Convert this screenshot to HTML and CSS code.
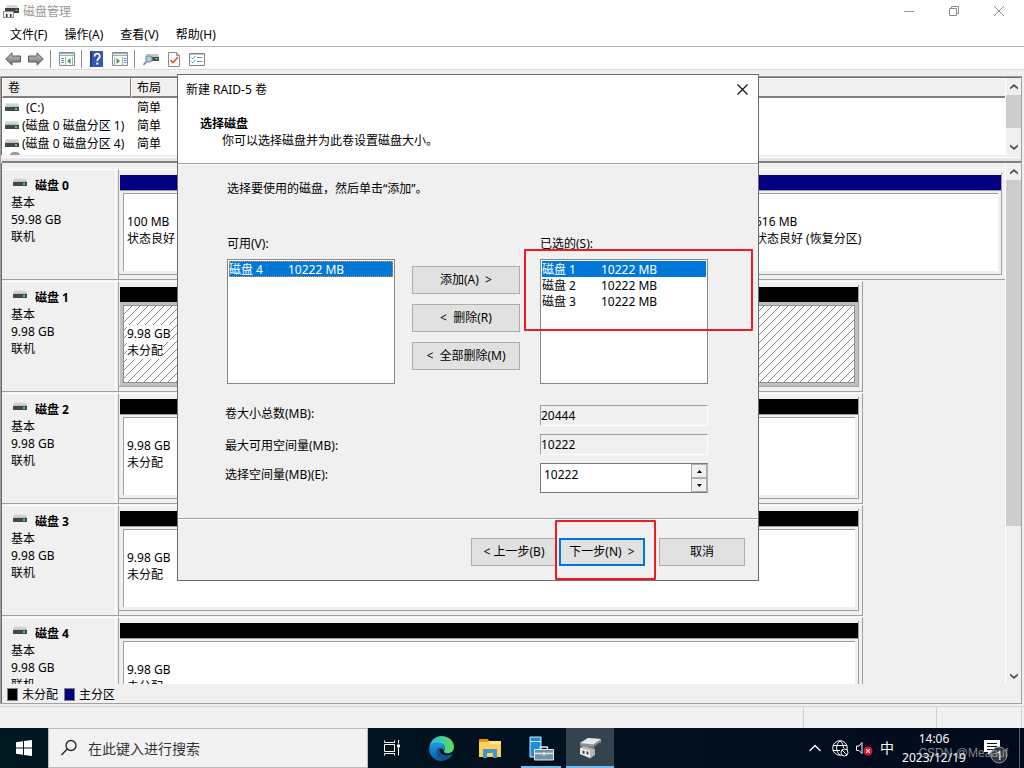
FILE: index.html
```html
<!DOCTYPE html>
<html lang="zh-CN">
<head>
<meta charset="utf-8">
<title>磁盘管理</title>
<link rel="stylesheet" href="styles.css">
</head>
<body>
<svg class="defs" aria-hidden="true">
  <defs>
    <linearGradient id="silver" x1="0" y1="0" x2="0" y2="1"><stop offset="0" stop-color="#e4e6e8"/><stop offset="1" stop-color="#b9bcbf"/></linearGradient>
    <linearGradient id="edge-a" x1="0" y1="0" x2="1" y2="0"><stop offset="0" stop-color="#2cb8e6"/><stop offset="1" stop-color="#62dd58"/></linearGradient>
    <linearGradient id="edge-b" x1="0" y1="0" x2="0" y2="1"><stop offset="0" stop-color="#1a9be0"/><stop offset="1" stop-color="#0c59a4"/></linearGradient>
    <linearGradient id="arrow-fill" x1="0" y1="0" x2="0" y2="1"><stop offset="0" stop-color="#c4c4c4"/><stop offset="1" stop-color="#6f6f6f"/></linearGradient>
    <pattern id="hatch" width="8" height="8" patternUnits="userSpaceOnUse"><path d="M-1 9L9 -1M-1 1L1 -1M7 9L9 7" stroke="#8c8c8c" stroke-width="1"/></pattern>
  </defs>
  <symbol id="drive" viewBox="0 0 14 8">
    <path d="M1 0h12l1 4H0z" fill="url(#silver)"/><path d="M0 4h14v4H0z" fill="#45484a"/><path d="M10 5h2v2h-2z" fill="#3be04a"/>
  </symbol>
  <symbol id="up" viewBox="0 0 8 6"><path d="M0 5.5V3.5L4 0L8 3.5V5.5L4 2.5z" fill="#505050"/></symbol>
  <symbol id="down" viewBox="0 0 8 6"><path d="M0 .5V2.500L4 6L8 2.500V.5L4 3.500z" fill="#505050"/></symbol>
</svg>

<div class="screen">
  <header class="titlebar">
    <svg class="app-icon" width="16" height="15" viewBox="0 0 16 15"><path d="M4 1h10l1.500 3H2.500z" fill="#d5d7d8"/><path d="M2 4h14v5H2z" fill="#3e4143"/><path d="M12.500 5.500h2v1.500h-2z" fill="#3be04a"/><path d="M0 7h11v7H0z" fill="#8b8e90"/><path d="M1 8h9v5H1z" fill="#f2f2f2"/><path d="M3 10h1.500v3H3zM7 10h1.500v3H7z" fill="#333"/></svg>
    <span class="title-text">磁盘管理</span>
    <div class="caption">
      <button type="button" aria-label="最小化"><svg width="10" height="10"><path d="M0 5.500h10" stroke="#999"/></svg></button>
      <button type="button" aria-label="还原"><svg width="10" height="10" fill="none" stroke="#8a8a8a"><path d="M.5 2.500h7v7h-7zM2.500 2.500v-2h7v7h-2"/></svg></button>
      <button type="button" aria-label="关闭"><svg width="10" height="10"><path d="M0 0L10 10M10 0L0 10" stroke="#8a8a8a"/></svg></button>
    </div>
  </header>
  <nav class="menubar">
    <button type="button">文件(F)</button><button type="button">操作(A)</button><button type="button">查看(V)</button><button type="button">帮助(H)</button>
  </nav>
  <div class="toolbar">
    <div class="history">
    <button type="button" aria-label="后退"><svg width="16" height="14" viewBox="0 0 16 14"><path d="M.7 7L7 .8V4H15.500V10H7V13.200z" fill="url(#arrow-fill)" stroke="#5c5c5c"/></svg></button>
    <button type="button" aria-label="前进"><svg width="16" height="14" viewBox="0 0 16 14"><path d="M15.300 7L9 .8V4H.5V10H9V13.200z" fill="url(#arrow-fill)" stroke="#5c5c5c"/></svg></button>
    </div>
    <i class="sep"></i>
    <button type="button" aria-label="显示控制台树"><svg width="16" height="14" viewBox="0 0 16 14"><path d="M.5 .5h15v13H.5z" fill="#fff" stroke="#858c93"/><path d="M1 1h14v3H1z" fill="#a5adb5"/><path d="M1 2.500h14" stroke="#e9ecef"/><path d="M6.500 5v8.500M13.500 5v8.500" stroke="#a5adb5"/><path d="M2 6.500h3M2 8.500h3M2 10.500h3" stroke="#5f87ad"/><path d="M11.500 6v6L8 9z" fill="#37a63b"/></svg></button>
    <i class="sep"></i>
    <button type="button" aria-label="帮助"><svg width="13" height="16" viewBox="0 0 13 16"><path d="M0 0h13v16H0z" fill="#3657b8"/><path d="M0 0h2v16H0z" fill="#223a86"/><path d="M4.500 5.500C4.500 1.500 10 2 9.800 5.200C9.700 7.500 7.300 7.200 7.300 10" fill="none" stroke="#fff" stroke-width="1.800"/><path d="M6.300 11.500h2v2h-2z" fill="#fff"/></svg></button>
    <button type="button" aria-label="显示操作窗格"><svg width="16" height="14" viewBox="0 0 16 14"><path d="M.5 .5h15v13H.5z" fill="#fff" stroke="#858c93"/><path d="M1 1h14v3H1z" fill="#a5adb5"/><path d="M1 2.500h14" stroke="#e9ecef"/><path d="M2.500 5v8.500M10.500 5v8.500" stroke="#a5adb5"/><path d="M12 6.500h2.500M12 8.500h2.500M12 10.500h2.500" stroke="#5f87ad"/><path d="M4.500 6v6L8 9z" fill="#37a63b"/></svg></button>
    <i class="sep"></i>
    <button type="button" aria-label="重新扫描磁盘"><svg width="16" height="14" viewBox="0 0 16 14"><path d="M3 2h12l1 3H2z" fill="#c2c6c9"/><path d="M3 5h13v4H3z" fill="#4b4f52"/><path d="M12.500 6h2v1.500h-2z" fill="#3be04a"/><circle cx="6" cy="7" r="3.200" fill="#a8d0e8" stroke="#6f8797"/><path d="M3.500 9.500L.5 13" stroke="#77889a" stroke-width="1.800"/></svg></button>
    <button type="button" aria-label="属性"><svg width="12" height="15" viewBox="0 0 12 15"><path d="M.5 .5h8l3 3v11H.5z" fill="#fff" stroke="#8a8a8a"/><path d="M8.500 .5v3h3" fill="none" stroke="#8a8a8a"/><path d="M2.500 8L5 10.500L10 5" fill="none" stroke="#e8541c" stroke-width="1.700"/></svg></button>
    <button type="button" aria-label="选项"><svg width="16" height="13" viewBox="0 0 16 13"><path d="M.5 .5h15v12H.5z" fill="#fff" stroke="#7c838a"/><path d="M.5 1h15" stroke="#7c838a"/><path d="M2.500 4.500l1.300 1.300L6.500 3M2.500 8.500l1.300 1.300L6.500 7" fill="none" stroke="#2f8fd8"/><path d="M8 4.500h5.500M8 8.500h5.500" stroke="#8b9096"/></svg></button>
  </div>

  <main class="workspace">
    <section class="volumes">
      <div class="volume-list">
        <table>
          <thead><tr><th class="col-name">卷</th><th class="col-layout">布局</th><th></th></tr></thead>
          <tbody>
            <tr><td><svg class="drive"><use href="#drive"/></svg> <span class="vol-c">(C:)</span></td><td>简单</td><td></td></tr>
            <tr><td><svg class="drive"><use href="#drive"/></svg><span>(磁盘 0 磁盘分区 1)</span></td><td>简单</td><td></td></tr>
            <tr><td><svg class="drive"><use href="#drive"/></svg><span>(磁盘 0 磁盘分区 4)</span></td><td>简单</td><td></td></tr>
          </tbody>
        </table>
        <div class="disc-peek"></div>
      </div>
      <div class="scrollbar">
        <button type="button" aria-label="向上滚动"><svg><use href="#up"/></svg></button>
        <div class="track"><div class="thumb thumb-vol"></div></div>
        <button type="button" aria-label="向下滚动"><svg><use href="#down"/></svg></button>
      </div>
    </section>
    <div class="splitter"></div>
    <section class="disks">
      <div class="disk-list">
        <article class="disk">
          <div class="disk-info"><h2><svg class="drive"><use href="#drive"/></svg>磁盘 0</h2><p>基本</p><p>59.98 GB</p><p>联机</p></div>
          <div class="graph"><div class="parts parts-three">
            <div class="part primary"><div class="region"><p>100 MB</p><p>状态良好</p></div></div>
            <div class="part primary"><div class="region"></div></div>
            <div class="part primary"><div class="region"><p>516 MB</p><p>状态良好 (恢复分区)</p></div></div>
          </div></div>
        </article>
        <article class="disk small">
          <div class="disk-info"><h2><svg class="drive"><use href="#drive"/></svg>磁盘 1</h2><p>基本</p><p>9.98 GB</p><p>联机</p></div>
          <div class="graph"><div class="parts"><div class="part picked"><div class="region"><svg class="hatch"><rect width="100%" height="100%" fill="url(#hatch)"/></svg><p>9.98 GB</p><p>未分配</p></div></div></div></div>
        </article>
        <article class="disk small">
          <div class="disk-info"><h2><svg class="drive"><use href="#drive"/></svg>磁盘 2</h2><p>基本</p><p>9.98 GB</p><p>联机</p></div>
          <div class="graph"><div class="parts"><div class="part"><div class="region"><p>9.98 GB</p><p>未分配</p></div></div></div></div>
        </article>
        <article class="disk small">
          <div class="disk-info"><h2><svg class="drive"><use href="#drive"/></svg>磁盘 3</h2><p>基本</p><p>9.98 GB</p><p>联机</p></div>
          <div class="graph"><div class="parts"><div class="part"><div class="region"><p>9.98 GB</p><p>未分配</p></div></div></div></div>
        </article>
        <article class="disk small">
          <div class="disk-info"><h2><svg class="drive"><use href="#drive"/></svg>磁盘 4</h2><p>基本</p><p>9.98 GB</p><p>联机</p></div>
          <div class="graph"><div class="parts"><div class="part"><div class="region"><p>9.98 GB</p><p>未分配</p></div></div></div></div>
        </article>
      </div>
      <div class="scrollbar">
        <button type="button" aria-label="向上滚动"><svg><use href="#up"/></svg></button>
        <div class="track"><div class="thumb thumb-disk"></div></div>
        <button type="button" aria-label="向下滚动"><svg><use href="#down"/></svg></button>
      </div>
    </section>
    <div class="legend"><i class="key black"></i><span>未分配</span><i class="key navy"></i><span>主分区</span></div>
  </main>
  <div class="statusbar"><div class="pane grow"></div><div class="pane mid"></div><div class="pane last"></div></div>

  <footer class="taskbar">
    <button type="button" class="start" aria-label="开始"><svg width="16" height="16" viewBox="0 0 16 16" fill="#fff"><path d="M0 2.200L7 1.200V7.500H0zM8 1L16 0V7.500H8zM0 8.500H7V14.800L0 13.800zM8 8.500H16V16L8 15z"/></svg></button>
    <label class="search"><svg width="18" height="18" viewBox="0 0 18 18" fill="none" stroke="#222" stroke-width="1.300"><circle cx="11" cy="6.500" r="5"/><path d="M7.300 10L1.500 16"/></svg><input type="text" placeholder="在此键入进行搜索" aria-label="搜索"></label>
    <button type="button" class="task" aria-label="任务视图"><svg width="18" height="16" viewBox="0 0 18 16" fill="none" stroke="#fff"><path d="M1.500 4.500h10v7h-10zM1.500 .5v2h10v-2M1.500 15.500v-2h10v2M15.500 0v3.500M15.500 8v7.500"/><path d="M14 4.500h3v3h-3z" fill="#fff" stroke="none"/></svg></button>
    <button type="button" class="task" aria-label="浏览器"><svg width="25" height="25" viewBox="0 0 24 24"><path d="M.5 10C1.500 4 6.500 0 12 0C19 0 24 5 24 10.500C24 14 21.500 16.500 18 16.500C15.500 16.500 14.300 15.700 14.300 14.800C14.300 14 15.300 13.700 15.300 11.800C15.300 9 12.500 6.700 8.700 6.700C5 6.700 2 8.400 .5 10z" fill="url(#edge-a)"/><path d="M.1 12C.2 8.800 4 6.300 8.200 6.300C12.500 6.300 15.300 9 15.300 11.800C15.300 12.900 14.800 13.700 14.400 14C12 10.500 8.200 12 8.200 16C8.200 20 11.500 23.500 15.500 23.300C8 26 0 20.300 .1 12z" fill="url(#edge-b)"/><path d="M8 12.500C5.500 18 9.500 24 15.500 23.300C19 22.300 21.800 19.800 22.800 17.500C23 17 22.700 16.800 22.300 17C17 19.800 10.500 18.500 10.300 13.500C10.200 12.300 11 11.400 11 11.400C9.800 11.200 8.500 11.700 8 12.500z" fill="#164f91"/></svg></button>
    <button type="button" class="task" aria-label="文件资源管理器"><svg width="22" height="19" viewBox="0 0 22 19"><path d="M0 1h9l2 2H22V18H0z" fill="#fccf58"/><path d="M0 1Q0 0 1 0H8.500L10 2L9 3H0z" fill="#e49b12"/><path d="M10 2h12v3H10z" fill="#ffe28c"/><path d="M4 19v-9h14v9h-4v-5H8v5z" fill="#3f94d5"/></svg></button>
    <button type="button" class="task running" aria-label="服务器管理器"><svg width="25" height="25" viewBox="0 0 25 25"><path d="M1 1h11v20H1z" fill="#1b8fdc" stroke="#d5edfb"/><path d="M1 5.500h11" stroke="#d5edfb"/><path d="M5.500 13.500h19v10.500h-19z" fill="#748ea2" stroke="#e1e9ee"/><path d="M11.500 13v-2h7v2M6 17.500h18M15 16v4" fill="none" stroke="#e1e9ee" stroke-width="1.300"/></svg></button>
    <button type="button" class="task active" aria-label="磁盘管理"><svg width="23" height="22" viewBox="0 0 23 22"><path d="M1 6L9 1L22 2V6L15 11L1 9z" fill="#8d8d8d"/><path d="M1 6L9 1L22 2L14 7.500z" fill="#e8e8e8"/><path d="M15 9.500L21.500 5V7L15 11.500z" fill="#444"/><path d="M1 11L4 9L16 12V18L11 21.500L1 17z" fill="#b5b5b5"/><path d="M1 11L11 13.500V20.500L1 17z" fill="#eee"/><path d="M3.500 13.500l2 .5v3l-2-.5zM7.500 14.300l2 .5v3l-2-.5z" fill="#444"/></svg></button>
    <div class="tray">
      <svg class="more" width="12" height="8" viewBox="0 0 12 8" fill="none" stroke="#fff" stroke-width="1.300"><path d="M.5 7L6 1.500L11.500 7"/></svg>
      <svg width="17" height="17" viewBox="0 0 17 17" fill="none" stroke="#fff"><circle cx="8" cy="8" r="7.300"/><path d="M8 .7C3.500 5 3.500 11 8 15.300M8 .7C10.500 3 11.500 5.500 11.400 8M1.300 5.500H14.700M.7 10.500H8"/><circle cx="12.500" cy="12.500" r="3.500" fill="#04101c"/><path d="M10 10L15 15"/></svg>
      <svg width="17" height="15" viewBox="0 0 17 15"><path d="M.5 5h2.500L6 1.500V12.500L3 9.500H.5z" fill="none" stroke="#fff"/><circle cx="12" cy="10" r="4.500" fill="#e81123"/><path d="M10.200 8.200l3.600 3.600M13.800 8.200l-3.600 3.600" stroke="#fff" stroke-width="1.200"/></svg>
      <span class="ime">中</span>
    </div>
    <div class="clock"><time>14:06</time><time>2023/12/19</time></div>
    <button type="button" class="notice" aria-label="通知"><svg width="26" height="26" viewBox="0 0 26 26"><path d="M1 2h16v12H8l-3 3v-3H1z" fill="#fff"/><path d="M4 5.500h10M4 8.500h10M4 11.500h6" stroke="#04101c"/><circle cx="16" cy="17" r="8" fill="#33383d" stroke="#8d9297"/></svg><span class="badge">1</span></button>
    <span class="credit">CSDN @Meaauf</span>
  </footer>

  <div class="dialog" role="dialog" aria-labelledby="dlg-title">
    <div class="dlg-title"><span id="dlg-title">新建 RAID-5 卷</span><button type="button" aria-label="关闭"><svg width="11" height="11"><path d="M.5 .5L10.500 10.500M10.500 .5L.5 10.500" stroke="#111" stroke-width="1.200"/></svg></button></div>
    <div class="dlg-head"><h1>选择磁盘</h1><p>你可以选择磁盘并为此卷设置磁盘大小。</p></div>
    <div class="dlg-body">
      <p>选择要使用的磁盘，然后单击“添加”。</p>
      <div class="picker">
        <span id="l-avail">可用(V):</span><span></span><span id="l-chosen">已选的(S):</span>
        <ul class="listbox" role="listbox" aria-labelledby="l-avail">
          <li class="on focus" role="option" aria-selected="true"><span>磁盘 4</span><span>10222 MB</span></li>
        </ul>
        <div class="moves"><button type="button" class="btn">添加(A) &nbsp;&gt;</button><button type="button" class="btn">&lt; &nbsp;删除(R)</button><button type="button" class="btn">&lt; &nbsp;全部删除(M)</button></div>
        <ul class="listbox" role="listbox" aria-labelledby="l-chosen">
          <li class="on" role="option" aria-selected="true"><span>磁盘 1</span><span>10222 MB</span></li>
          <li role="option"><span>磁盘 2</span><span>10222 MB</span></li>
          <li role="option"><span>磁盘 3</span><span>10222 MB</span></li>
        </ul>
      </div>
      <div class="sizes">
        <label for="total">卷大小总数(MB):</label><input id="total" class="sunken" type="text" value="20444" readonly>
        <label for="max">最大可用空间量(MB):</label><input id="max" class="sunken" type="text" value="10222" readonly>
        <label for="amount">选择空间量(MB)(E):</label>
        <div class="spin"><input id="amount" type="text" value="10222"><div class="spin-btns"><button type="button" aria-label="增加"><svg width="5" height="3"><path d="M0 3L2.500 0L5 3z"/></svg></button><button type="button" aria-label="减少"><svg width="5" height="3"><path d="M0 0L2.500 3L5 0z"/></svg></button></div></div>
      </div>
    </div>
    <div class="dlg-foot"><button type="button" class="btn">&lt; 上一步(B)</button><button type="button" class="btn default">下一步(N) &nbsp;&gt;</button><button type="button" class="btn cancel">取消</button></div>
    <div class="mark mark-list"></div>
    <div class="mark mark-next"></div>
  </div>
</div>
</body>
</html>
```
FILE: styles.css
```css
* { box-sizing: border-box; }
body { margin: 0; color: #000; font: 12px/17px "Noto Sans", "Noto Sans CJK SC", sans-serif; }
button, input { margin: 0; padding: 0; border: 0; background: none; color: inherit; font: inherit; }
h1, h2, p, ul { margin: 0; padding: 0; font-size: inherit; }
svg { display: block; flex: none; }
.defs { position: absolute; width: 0; height: 0; }

.screen { position: relative; display: flex; flex-direction: column; height: 100vh; overflow: hidden; background: #f0f0f0; }

.titlebar { display: flex; flex: none; align-items: center; height: 22px; padding-left: 3px; background: #fff; color: #999; }
.title-text { flex: 1; padding-left: 4px; }
.caption { display: flex; padding-right: 3px; }
.caption button { display: flex; align-items: center; justify-content: center; width: 45px; height: 22px; }
.menubar { display: flex; flex: none; gap: 17px; height: 25px; padding-left: 10px; background: #fff; border-bottom: 1px solid #b4b4b4; }
.toolbar { display: flex; flex: none; align-items: center; height: 23px; padding: 2px 0 0 5px; gap: 6px; background: #fff; border-bottom: 1px solid #dcdcdc; }
.history { display: flex; gap: 7px; }
.toolbar .sep { width: 1px; height: 18px; background: #8c8c8c; }
.toolbar .sep + button { margin-left: 2px; }
.toolbar > button + button { margin-left: 3px; }

.workspace { display: flex; flex: 1; flex-direction: column; min-height: 0; margin: 6px 2px 2px 0; border: 1px solid #a0a0a0; }
.volumes { display: flex; flex: none; height: 78px; border-top: 1px solid #696969; border-left: 1px solid #696969; }
.volume-list { flex: 1; overflow: hidden; background: #fff; }
.volumes table { width: 100%; border-collapse: separate; border-spacing: 0; table-layout: fixed; }
.volumes th { height: 20px; padding: 0 5px; background: #f0f0f0; border-top: 1px solid #fff; border-right: 1px solid #808080; border-left: 1px solid #fff; border-bottom: 2px solid #808080; font-weight: 400; text-align: left; }
.volumes th:last-child { border-right: 0; }
.volumes td { height: 18px; padding: 0 6px; }
.volumes td:first-child { display: flex; align-items: center; gap: 3px; padding: 0 0 0 3px; white-space: nowrap; }
.col-name { width: 129px; }
.col-layout { width: 70px; }
.vol-c { padding-left: 4px; }
.drive { width: 14px; height: 8px; }
.disc-peek { width: 10px; height: 4px; margin-left: 8px; border-radius: 5px 5px 0 0; background: #9a9a9a; }

.scrollbar { display: flex; flex: none; flex-direction: column; width: 16px; background: #f0f0f0; border-left: 1px solid #fff; }
.scrollbar button { display: flex; align-items: center; justify-content: center; height: 17px; }
.scrollbar svg { width: 8px; height: 6px; }
.track { flex: 1; }
.thumb { background: #cdcdcd; }
.thumb-vol { height: 76%; }
.thumb-disk { height: 71%; }

.splitter { flex: none; height: 8px; margin-left: 1px; border-bottom: 2px solid #808080; background: linear-gradient(#f0f0f0 2px, #fff 2px, #fff 3px, #e6e6e6 3px); }

.disks { display: flex; flex: 1; min-height: 0; overflow: hidden; border-left: 1px solid #696969; }
.disk-list { flex: 1; min-width: 0; padding-top: 6px; overflow: hidden; }
.disk { display: flex; height: 111px; margin-bottom: 1px; }
.disk-info { flex: none; width: 117px; padding: 7px 9px 0; border: solid; border-width: 1px 1px 1px 0; border-color: #fff #a0a0a0 #a0a0a0; box-shadow: inset -2px 0 #f0f0f0, inset -3px 0 #fff; }
.disk-info h2 { display: flex; gap: 8px; padding-left: 2px; font-weight: 700; }
.disk-info h2 svg { margin-top: 1px; }
.graph { display: flex; flex: 1; min-width: 0; padding: 3px 3px 4px 0; border: solid; border-width: 1px 0 1px; border-color: #fff #a0a0a0 #a0a0a0; }
.small .graph { flex: none; width: calc(74% + 2px); border-right-width: 1px; }
.parts { display: grid; flex: 1; min-width: 0; padding: 2px 0 0 1px; border: solid #a0a0a0; border-width: 0 1px 1px 0; }
.parts-three { grid-template-columns: 100px 5fr 253px; }
.part { display: flex; flex-direction: column; min-width: 0; border-top: 15px solid #000; background: linear-gradient(#a0a0a0 1px, transparent 1px) padding-box; }
.part.primary { border-top-color: navy; }
.region { position: relative; flex: 1; margin: 3px 3px 3px; padding: 19px 3px 0; background: #fff; border: solid #a0a0a0; border-width: 1px 0 0 1px; white-space: nowrap; }
.part.picked { background: #c0c0c0; }
.picked .region { border: 1px solid #909090; }
.hatch { position: absolute; inset: 0; width: 100%; height: 100%; }
.region p { position: relative; width: max-content; background: #fff; }

.legend { display: flex; flex: none; align-items: center; height: 19px; padding: 2px 0 0 5px; border-left: 1px solid #696969; }
.legend .key { width: 11px; height: 13px; border: 1px solid #808080; }
.legend span { padding: 0 6px 0 4px; }
.key.black { background: #000; }
.key.navy { background: navy; }
.statusbar { display: flex; flex: none; height: 22px; border-top: 1px solid #d7d7d7; }
.pane { border-right: 1px solid #d0d0d0; }
.grow { flex: 1; }
.mid { width: 133px; }
.last { width: 85px; margin-right: 2px; }

.taskbar { position: relative; display: flex; flex: none; height: 40px; background: linear-gradient(90deg, #001820, #02101f 60%, #000a1c); color: #fff; }
.start { display: flex; align-items: center; justify-content: center; width: 48px; }
.search { display: flex; flex: 0 0 320px; align-items: center; gap: 10px; padding-left: 11px; background: #f2f2f2; border: 1px solid #bcbcbc; }
.search input { flex: 1; min-width: 0; color: #333; font-size: 14px; }
.search input::placeholder { color: #333; opacity: 1; }
.task { display: flex; align-items: center; justify-content: center; width: 48px; margin-right: 1px; }
.running { box-shadow: inset 0 -2px #76b9ed; width: 40px; margin: 0 5px 0 6px; }
.active { background: #34444f; box-shadow: inset 0 -2px #76b9ed; }
.tray { display: flex; align-items: center; gap: 7px; margin-left: auto; }
.tray .more { margin-right: 4px; }
.ime { font-size: 14px; line-height: 20px; }
.clock { display: flex; flex-direction: column; align-items: center; justify-content: center; width: 80px; line-height: 19px; }
.notice { position: relative; display: flex; align-items: center; width: 46px; margin-right: 4px; padding: 6px 0 0 9px; border-right: 1px solid #566069; }
.badge { position: absolute; left: 22px; top: 19px; }
.credit { position: absolute; right: 16px; bottom: 6px; color: rgba(200, 200, 200, .65); font-family: "Liberation Sans", sans-serif; }

.dialog { position: absolute; left: 177px; top: 74px; display: flex; flex-direction: column; width: 582px; background: #f0f0f0; border: 1px solid #6b6b6b; line-height: 16px; }
.dlg-title { display: flex; align-items: center; justify-content: space-between; height: 29px; padding: 0 10px 0 8px; background: #fff; }
.dlg-head { height: 60px; padding: 12px 22px 0; background: #fff; border-bottom: 1px solid #a0a0a0; box-shadow: 0 1px #fff; }
.dlg-head h1 { font-weight: 700; }
.dlg-head p { padding: 1px 0 0 22px; }
.dlg-body { padding: 17px 46px 25px 49px; }
.picker { display: grid; grid-template-columns: 168px 108px 168px; column-gap: 17px; row-gap: 7px; margin-top: 39px; }
.picker > :nth-child(3n) { margin-left: 3px; margin-right: -3px; }
.listbox { height: 125px; padding: 1px; background: #fff; border: 1px solid #828790; list-style: none; }
.listbox li { display: grid; grid-template-columns: 59px 1fr; height: 16px; line-height: 18px; }
.listbox .on { background: #0078d7; color: #fff; }
.listbox .focus { outline: 1px dotted #ff8728; outline-offset: -1px; }
.moves { display: flex; flex-direction: column; gap: 10px; padding-top: 7px; }
.btn { height: 28px; background: #e1e1e1; border: 1px solid #adadad; }
.sizes { display: grid; grid-template-columns: 315px 168px; row-gap: 8px; margin: 21px 0 0 -2px; }
.sizes label { padding-top: 1px; }
.sizes label ~ label { padding-top: 4px; }
.sunken { height: 21px; border: 1px solid; border-color: #a0a0a0 #fff #fff #a0a0a0; }
.spin { display: flex; height: 30px; background: #fff; border: 1px solid #7a7a7a; border-right-color: #adadad; }
.spin input { flex: 1; min-width: 0; padding: 0 0 6px 3px; }
.spin-btns { display: flex; flex-direction: column; width: 16px; }
.spin-btns button { display: flex; flex: 1; align-items: center; justify-content: center; background: #f0f0f0; border: 1px solid #adadad; }
.dlg-foot { display: flex; justify-content: flex-end; gap: 2px; padding: 19px 13px 14px; border-top: 1px solid #a0a0a0; box-shadow: inset 0 1px #fff; }
.dlg-foot .btn { width: 86px; }
.dlg-foot .default { border: 2px solid #0078d7; }
.dlg-foot .cancel { margin-left: 12px; }
.mark { position: absolute; border: 2px solid #ed1c24; border-radius: 1px; pointer-events: none; }
.mark-list { left: 346px; top: 174px; width: 229px; height: 82px; }
.mark-next { left: 377px; top: 445px; width: 101px; height: 60px; }
```
